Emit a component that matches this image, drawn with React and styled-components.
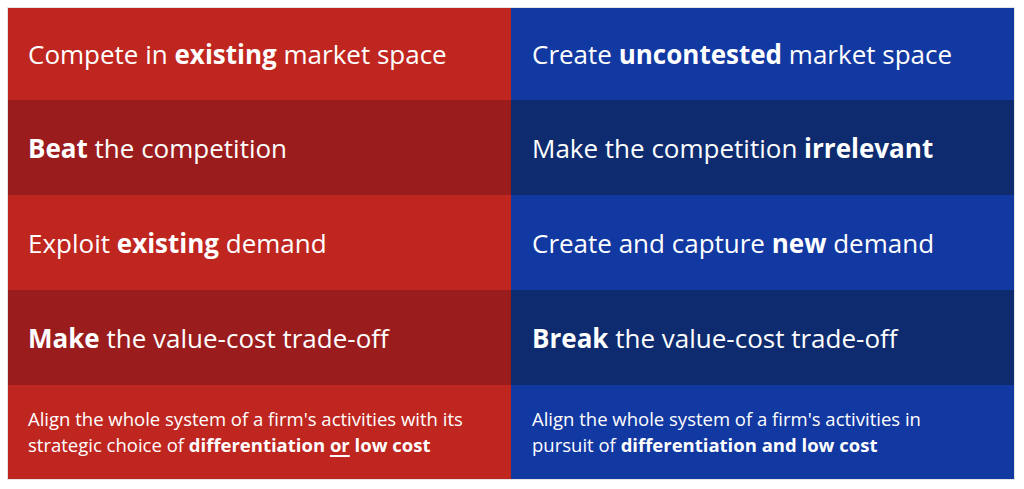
import React from "react";
import styled, { createGlobalStyle } from "styled-components";

const GlobalStyle = createGlobalStyle`
  body {
    margin: 0;
    background: #ffffff;
    font-family: "Open Sans", "Noto Sans", sans-serif;
  }
`;

const Page = styled.div`
  width: 1024px;
  height: 489px;
  padding: 8px 10px 10px 8px;
  box-sizing: border-box;
`;

const Table = styled.div`
  display: grid;
  grid-template-columns: 503px 503px;
  grid-template-rows: 92px 95px 95px 95px 94px;
  outline: 1px solid #e4e4e4;
`;

const Cell = styled.div`
  display: flex;
  align-items: center;
  padding-left: ${(p) => (p.$side === "left" ? "20px" : "21px")};
  box-sizing: border-box;
  color: #ffffff;
  font-size: ${(p) => (p.$small ? "18.5px" : "26px")};
  line-height: ${(p) => (p.$small ? "26px" : "34px")};
  background: ${(p) =>
    p.$side === "left"
      ? p.$dark
        ? "#9b1c1d"
        : "#bf2620"
      : p.$dark
      ? "#0d2b6e"
      : "#1238a2"};

  b {
    font-weight: 700;
  }
  u {
    text-underline-offset: 3px;
    text-decoration-thickness: 2px;
  }
`;

const rows = [
  {
    left: <>Compete in <b>existing</b> market space</>,
    right: <>Create <b>uncontested</b> market space</>,
  },
  {
    dark: true,
    left: <><b>Beat</b> the competition</>,
    right: <>Make the competition <b>irrelevant</b></>,
  },
  {
    left: <>Exploit <b>existing</b> demand</>,
    right: <>Create and capture <b>new</b> demand</>,
  },
  {
    dark: true,
    left: <><b>Make</b> the value-cost trade-off</>,
    right: <><b>Break</b> the value-cost trade-off</>,
  },
];

const App = () => {
  return (
    <>
      <GlobalStyle />
      <Page>
        <Table>
          {rows.map((r, i) => (
            <React.Fragment key={i}>
              <Cell $side="left" $dark={r.dark}>
                <span>{r.left}</span>
              </Cell>
              <Cell $side="right" $dark={r.dark}>
                <span>{r.right}</span>
              </Cell>
            </React.Fragment>
          ))}
          <Cell $side="left" $small>
            <span>
              Align the whole system of a firm's activities with its
              <br />
              strategic choice of <b>differentiation <u>or</u> low cost</b>
            </span>
          </Cell>
          <Cell $side="right" $small>
            <span>
              Align the whole system of a firm's activities in
              <br />
              pursuit of <b>differentiation and low cost</b>
            </span>
          </Cell>
        </Table>
      </Page>
    </>
  );
};

export default App;
